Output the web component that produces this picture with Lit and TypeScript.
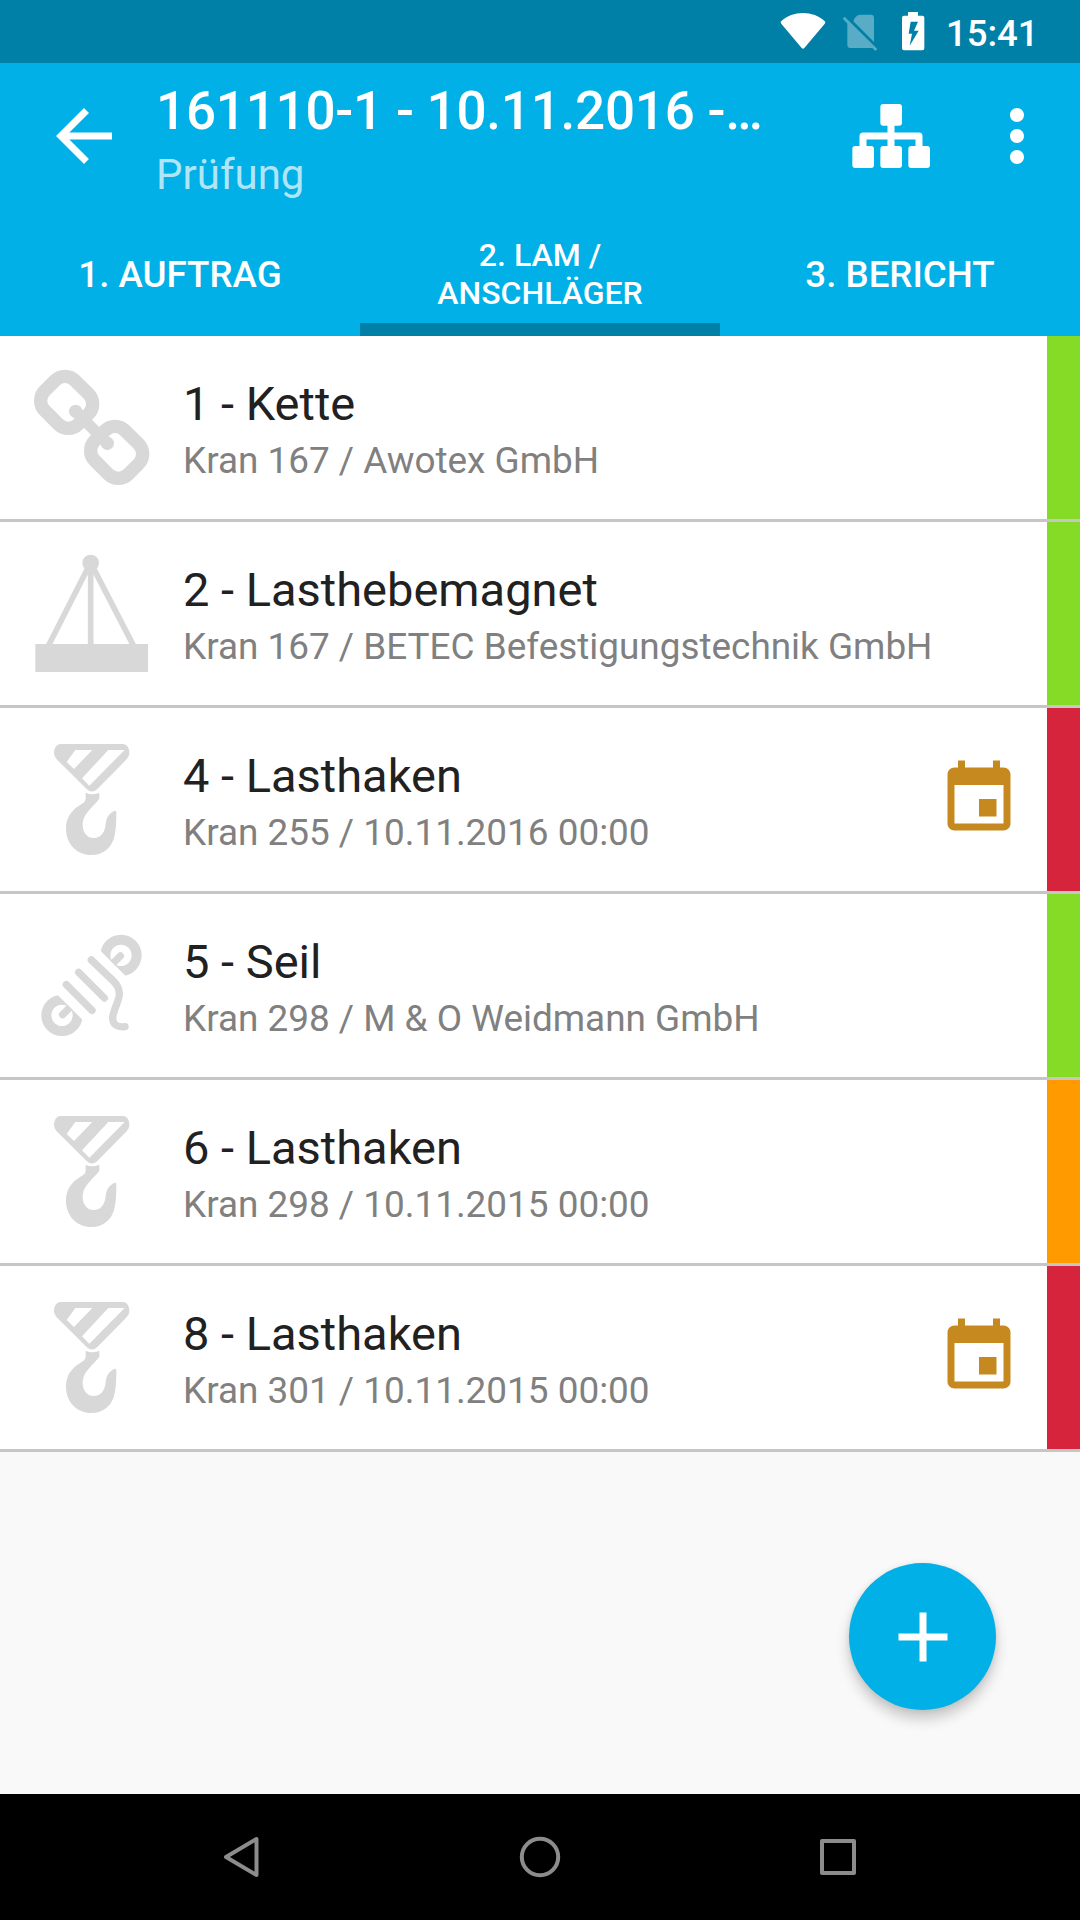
import { LitElement, html, svg, css, TemplateResult } from "lit";
import { customElement, property } from "lit/decorators.js";
import { classMap } from "lit/directives/class-map.js";

type Kind = "chain" | "magnet" | "hook" | "rope";
type Status = "ok" | "warn" | "error";

interface Item {
  title: string;
  detail: string;
  kind: Kind;
  status: Status;
  due?: boolean;
}

const ITEMS: Item[] = [
  { title: "1 - Kette", detail: "Kran 167 / Awotex GmbH", kind: "chain", status: "ok" },
  { title: "2 - Lasthebemagnet", detail: "Kran 167 / BETEC Befestigungstechnik GmbH", kind: "magnet", status: "ok" },
  { title: "4 - Lasthaken", detail: "Kran 255 / 10.11.2016 00:00", kind: "hook", status: "error", due: true },
  { title: "5 - Seil", detail: "Kran 298 / M & O Weidmann GmbH", kind: "rope", status: "ok" },
  { title: "6 - Lasthaken", detail: "Kran 298 / 10.11.2015 00:00", kind: "hook", status: "warn" },
  { title: "8 - Lasthaken", detail: "Kran 301 / 10.11.2015 00:00", kind: "hook", status: "error", due: true },
];

const KIND_ICONS: Record<Kind, { box: string; art: TemplateResult }> = {
  chain: {
    box: "90 78 360 360",
    art: svg`
      <g fill="none" stroke="currentColor" stroke-width="40">
        <rect x="-71" y="-64" width="142" height="128" rx="42" transform="translate(200 187) rotate(45)" />
        <rect x="-71" y="-64" width="142" height="128" rx="42" transform="translate(350 337) rotate(45)" />
      </g>
      <path d="M228 215L322 310" stroke="currentColor" stroke-width="34" />
      <circle cx="227" cy="214" r="20" fill="currentColor" />
      <circle cx="322" cy="310" r="20" fill="currentColor" />`,
  },
  magnet: {
    box: "90 66 360 360",
    art: svg`
      <circle cx="272" cy="99" r="25" fill="currentColor" />
      <path d="M268 106L146 346M272 106V346M276 106L400 346" fill="none" stroke="currentColor" stroke-width="17" />
      <rect x="106" y="342" width="338" height="84" fill="currentColor" />`,
  },
  hook: {
    box: "90 54 360 360",
    art: svg`
      <path fill="currentColor" fill-rule="evenodd"
        d="M180 72H371Q388 76 388 100Q388 110 380 118L292 207Q276 222 260 207L170 118Q162 110 162 100Q162 76 180 72Z
           M226 90L200 126L222 147L277 90Z M325 90L246 175L268 197L374 90Z" />
      <path fill="currentColor"
        d="M257 218Q277 228 298 218V236C290 248 280 255 268 270C254 286 248 298 248 316C249 338 261 354 280 354C304 354 315 336 317 312C319 292 328 279 344 272Q350 272 349 280C349 308 348 335 341 358C330 388 307 405 275 405C230 405 198 371 198 326C198 296 211 274 236 258C252 249 258 244 257 232Z" />`,
  },
  rope: {
    box: "90 72 360 360",
    art: svg`
      <clipPath id="lower-coil"><path d="M80 192L300 412V440H80Z" /></clipPath>
      <clipPath id="upper-coil"><path d="M220 71V60H460V311Z" /></clipPath>
      <g fill="none" stroke="currentColor" stroke-width="22" stroke-linecap="round">
        <g clip-path="url(#lower-coil)">
          <circle cx="186" cy="346" r="47" stroke-width="30" />
          <path d="M188 344L230 302" />
        </g>
        <g clip-path="url(#upper-coil)">
          <circle cx="363" cy="166" r="47" stroke-width="30" />
          <path d="M361 168L320 209" />
        </g>
        <path d="M199 254L276 331M236 217L313 294" />
        <path d="M274 180L340 243Q362 264 357 291C353 310 341 329 338 352C337 374 352 383 375 380" />
      </g>`,
  },
};

@customElement("status-bar")
class StatusBar extends LitElement {
  static styles = css`
    :host {
      display: flex;
      justify-content: flex-end;
      align-items: flex-start;
      height: 63px;
      box-sizing: border-box;
      padding-right: 44px;
      background: #007fa7;
      color: #fff;
    }
    .icons {
      width: 186px;
      height: 63px;
      flex: none;
    }
    .clock {
      width: 90px;
      box-sizing: border-box;
      padding: 13px 1.5px 0 0;
      text-align: right;
      font-size: 36.5px;
      font-weight: 500;
      line-height: 42px;
    }
  `;
  render() {
    return html`
      <svg class="icons" viewBox="0 0 558 189" fill="#fff">
        <path d="M62 65C82 47 104 39 129 39S176 47 196 65Q196 70 193 73L133 144Q129 149 125 144L65 73Q62 70 62 65Z" />
        <g opacity=".35">
          <path d="M284 54Q292 44 300 44H334Q342 45 342 53V126L280 64Z" />
          <path d="M262 62L344 144H271Q262 144 262 135Z" />
          <path d="M254 50L352 147L346 153L248 56Z" />
        </g>
        <path fill-rule="evenodd"
          d="M444 36H474V47H487Q493 47 493 53V145Q493 151 487 151H432Q426 151 426 145V53Q426 47 432 47H444ZM452 65L446 101H456L449 137L476 92H462L474 65Z" />
      </svg>
      <span class="clock">15:41</span>
    `;
  }
}

@customElement("app-header")
class AppHeader extends LitElement {
  static styles = css`
    :host {
      display: block;
      background: #00b0e6;
      color: #fff;
    }
    .toolbar {
      display: flex;
      height: 147px;
      box-sizing: border-box;
      padding: 0 21px 0 42px;
    }
    .icon {
      width: 84px;
      height: 84px;
      flex: none;
      margin-top: 31px;
    }
    .titles {
      flex: 1;
      padding: 16px 0 0 30px;
      white-space: nowrap;
    }
    .title {
      font-size: 53px;
      font-weight: 500;
      line-height: 64px;
      letter-spacing: -0.24px;
    }
    .subtitle {
      margin-top: 7px;
      font-size: 42px;
      line-height: 50px;
      color: rgba(255, 255, 255, 0.7);
    }
    .tree {
      margin-right: 42px;
    }
    .tabs {
      display: grid;
      grid-template-columns: repeat(3, 1fr);
      height: 126px;
    }
    .tab {
      display: flex;
      align-items: center;
      justify-content: center;
      box-sizing: border-box;
      text-align: center;
      font-size: 36.7px;
      font-weight: 500;
      line-height: 42px;
      padding-top: 3px;
    }
    .active {
      font-size: 32px;
      line-height: 38px;
      padding-top: 14px;
      border-bottom: 13px solid #007fa7;
    }
  `;
  render() {
    return html`
      <div class="toolbar">
        <svg class="icon" viewBox="0 0 24 24" fill="#fff">
          <path d="M20 11H7.83l5.59-5.59L12 4l-8 8 8 8 1.41-1.41L7.83 13H20v-2z" />
        </svg>
        <div class="titles">
          <div class="title">161110-1 - 10.11.2016 -…</div>
          <div class="subtitle">Prüfung</div>
        </div>
        <svg class="icon tree" viewBox="267 282 252 252" fill="#fff">
          <rect x="361" y="312" width="65" height="65" rx="9" />
          <rect x="277" y="438" width="65" height="66" rx="9" />
          <rect x="361" y="438" width="65" height="66" rx="9" />
          <rect x="445" y="438" width="65" height="66" rx="9" />
          <path d="M393 370V445M309 445V408H477V445" fill="none" stroke="#fff" stroke-width="21" stroke-linejoin="round" />
        </svg>
        <svg class="icon" viewBox="0 0 24 24" fill="#fff">
          <path d="M12 8c1.1 0 2-.9 2-2s-.9-2-2-2-2 .9-2 2 .9 2 2 2zm0 2c-1.1 0-2 .9-2 2s.9 2 2 2 2-.9 2-2-.9-2-2-2zm0 6c-1.1 0-2 .9-2 2s.9 2 2 2 2-.9 2-2-.9-2-2-2z" />
        </svg>
      </div>
      <div class="tabs">
        <div class="tab">1. AUFTRAG</div>
        <div class="tab active">2. LAM /<br />ANSCHLÄGER</div>
        <div class="tab">3. BERICHT</div>
      </div>
    `;
  }
}

@customElement("item-row")
class ItemRow extends LitElement {
  @property({ attribute: false }) item!: Item;

  static styles = css`
    :host {
      display: block;
    }
    .row {
      display: flex;
      height: 186px;
      box-sizing: border-box;
      border-bottom: 3px solid #c6c6c6;
      background: #fff;
    }
    .kind {
      width: 120px;
      height: 120px;
      flex: none;
      margin: 30px 33px 0 30px;
      color: #d8d8d8;
    }
    .text {
      flex: 1;
      padding-top: 40px;
      white-space: nowrap;
    }
    .title {
      font-size: 47px;
      line-height: 56px;
      color: #212121;
    }
    .detail {
      margin-top: 8px;
      font-size: 36.9px;
      line-height: 42px;
      color: #808080;
    }
    .due {
      width: 84px;
      height: 84px;
      flex: none;
      margin: 49px 26px 0 0;
    }
    .strip {
      width: 33px;
      flex: none;
    }
    .ok {
      background: #85db25;
    }
    .warn {
      background: #ff9b00;
    }
    .error {
      background: #d6243c;
    }
  `;
  render() {
    const { title, detail, kind, status, due } = this.item;
    const icon = KIND_ICONS[kind];
    return html`
      <div class="row">
        <svg class="kind" viewBox=${icon.box}>${icon.art}</svg>
        <div class="text">
          <div class="title">${title}</div>
          <div class="detail">${detail}</div>
        </div>
        ${due
          ? html`<svg class="due" viewBox="0 0 24 24" fill="#c68920">
              <path d="M17 12h-5v5h5v-5zM16 1v2H8V1H6v2H5c-1.11 0-1.99.9-1.99 2L3 19c0 1.1.89 2 2 2h14c1.1 0 2-.9 2-2V5c0-1.1-.9-2-2-2h-1V1h-2zm3 18H5V8h14v11z" />
            </svg>`
          : null}
        <div class=${classMap({ strip: true, [status]: true })}></div>
      </div>
    `;
  }
}

@customElement("nav-bar")
class NavBar extends LitElement {
  static styles = css`
    :host {
      display: grid;
      grid-template-columns: repeat(3, 298px);
      justify-content: center;
      align-items: center;
      justify-items: center;
      height: 126px;
      background: #000;
    }
    .key {
      width: 60px;
      height: 60px;
      fill: none;
      stroke: #8c8c8c;
      stroke-width: 4;
      stroke-linejoin: round;
    }
  `;
  render() {
    return html`
      <svg class="key" viewBox="0 0 60 60"><path d="M14 30L44.5 12V48Z" /></svg>
      <svg class="key" viewBox="0 0 60 60"><circle cx="30" cy="30" r="18.2" /></svg>
      <svg class="key" viewBox="0 0 60 60"><rect x="14" y="14" width="32" height="32" /></svg>
    `;
  }
}

@customElement("app-root")
class AppRoot extends LitElement {
  static styles = css`
    :host {
      display: flex;
      flex-direction: column;
      position: relative;
      width: 1080px;
      height: 1920px;
      overflow: hidden;
      background: #f9f9f9;
      font-family: Roboto, sans-serif;
    }
    .list {
      flex: 1;
    }
    .fab {
      position: absolute;
      right: 84px;
      bottom: 210px;
      width: 147px;
      height: 147px;
      display: flex;
      align-items: center;
      justify-content: center;
      border-radius: 50%;
      background: #00b0e6;
      box-shadow: 0 9px 14px rgba(0, 0, 0, 0.2), 0 1px 6px rgba(0, 0, 0, 0.08);
    }
    .plus {
      width: 84px;
      height: 84px;
    }
  `;
  render() {
    return html`
      <status-bar></status-bar>
      <app-header></app-header>
      <div class="list">${ITEMS.map((item) => html`<item-row .item=${item}></item-row>`)}</div>
      <div class="fab">
        <svg class="plus" viewBox="0 0 24 24" fill="#fff"><path d="M19 13h-6v6h-2v-6H5v-2h6V5h2v6h6v2z" /></svg>
      </div>
      <nav-bar></nav-bar>
    `;
  }
}
